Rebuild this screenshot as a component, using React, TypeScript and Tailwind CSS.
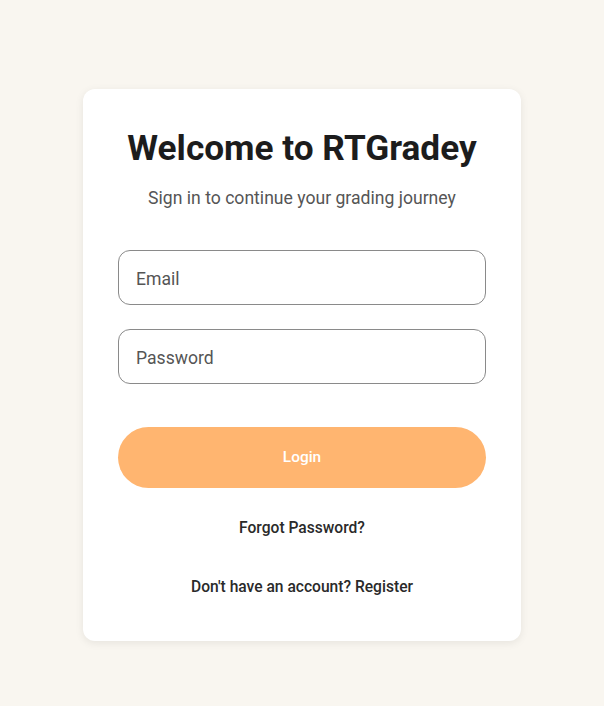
export default function App() {
  return (
    <div
      className="min-h-[706px] w-full bg-[#f9f6f0] flex justify-center pt-[89px]"
      style={{ fontFamily: "Roboto, 'Liberation Sans', sans-serif" }}
    >
      <div className="w-[438px] h-[552px] bg-white rounded-[12px] shadow-[0_2px_8px_rgba(0,0,0,0.08)] px-[35px] pt-[37px] flex flex-col items-center">
        <h1 className="text-[35.2px] leading-[44px] font-bold text-[#1c1c1c] text-center">
          Welcome to RTGradey
        </h1>
        <p className="mt-[15px] text-[17.6px] leading-[26px] text-[#555] text-center">
          Sign in to continue your grading journey
        </p>

        <div className="mt-[39px] w-full flex flex-col gap-[24px]">
          <input
            type="email"
            placeholder="Email"
            className="w-full h-[55px] px-[17px] pt-[2px] rounded-[12px] border border-[#8a8a8a] text-[17.6px] text-[#333] placeholder:text-[#555] outline-none"
          />
          <input
            type="password"
            placeholder="Password"
            className="w-full h-[55px] px-[17px] pt-[2px] rounded-[12px] border border-[#8a8a8a] text-[17.6px] text-[#333] placeholder:text-[#555] outline-none"
          />
        </div>

        <button className="mt-[43px] w-full h-[61px] rounded-full bg-[#ffb570] text-white text-[15.4px] font-medium">
          Login
        </button>

        <button className="mt-[29px] text-[15.6px] leading-[22px] font-medium text-[#2a2a2a]">
          Forgot Password?
        </button>

        <p className="mt-[37px] text-[15.6px] leading-[22px] font-medium text-[#2a2a2a]">
          Don't have an account? Register
        </p>
      </div>
    </div>
  );
}
